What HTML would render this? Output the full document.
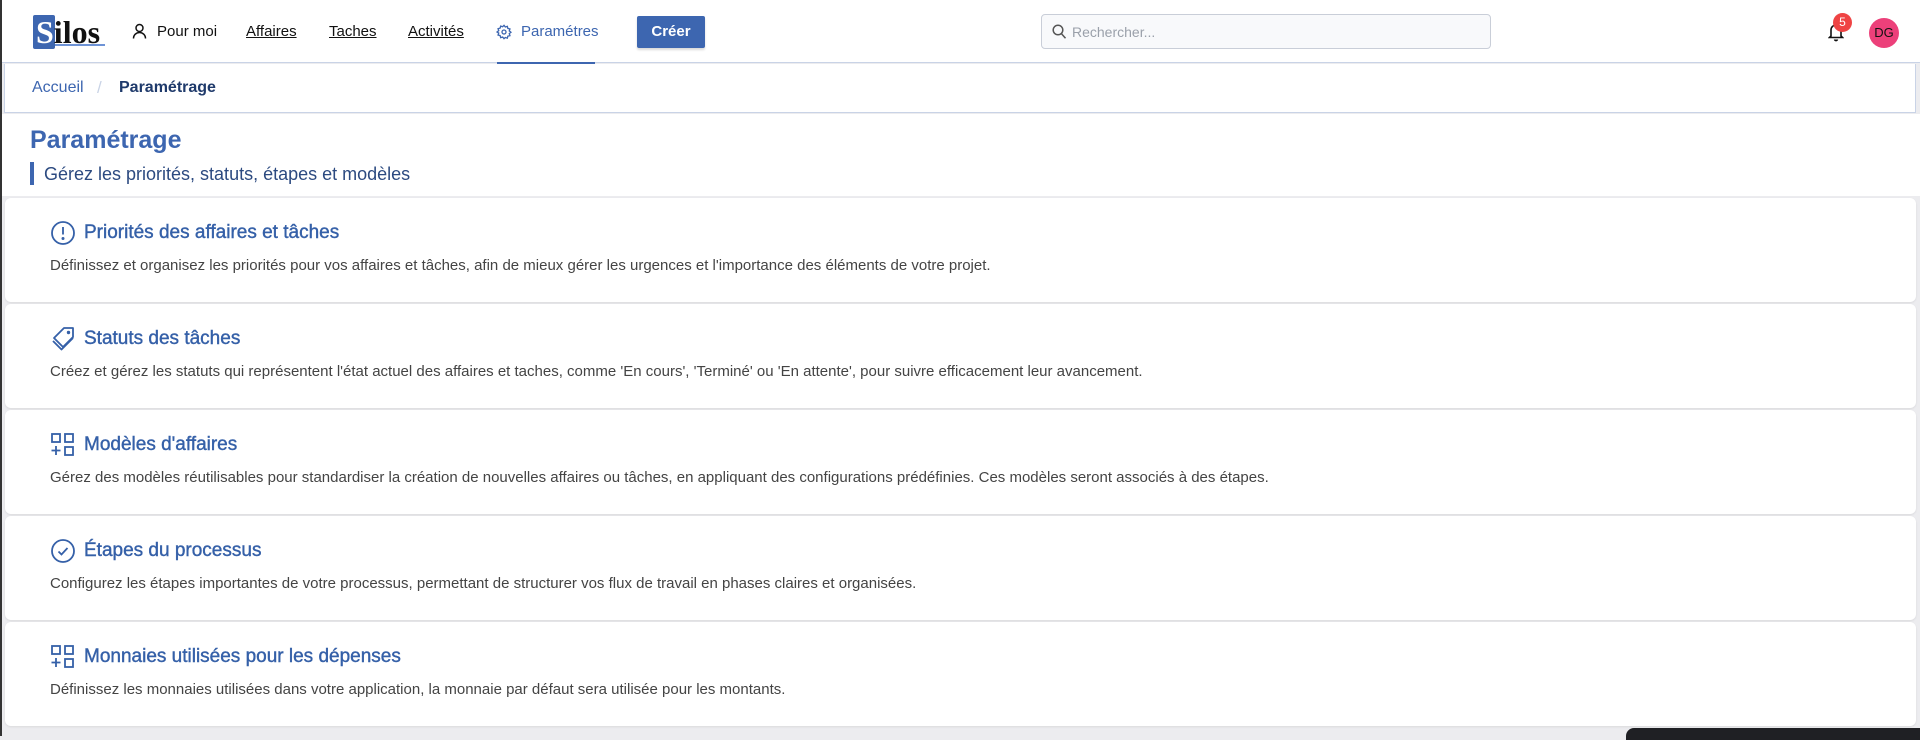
<!DOCTYPE html>
<html><head><meta charset="utf-8"><style>
*{box-sizing:border-box;margin:0;padding:0}
body{width:1920px;height:736px;overflow:hidden;background:#ececef;font-family:"Liberation Sans",sans-serif;position:relative}
.hdr{position:absolute;left:0;top:0;width:1920px;height:63px;background:#fff;border-bottom:1px solid #c9d3e6}
.leftbar{position:absolute;left:0;top:0;width:2px;height:736px;background:#333;z-index:5}
.logo{position:absolute;left:33px;top:15px;height:34px}
.logo .s{position:absolute;left:0;top:0;width:22px;height:34px;background:#3d66b0;border-radius:2px}
.logo .t{position:absolute;left:3px;top:-1px;font-family:"Liberation Serif",serif;font-weight:bold;font-size:32px;color:#111;white-space:nowrap}
.logo .t b{color:#fff}
.logo .u{position:absolute;left:22px;top:29px;width:50px;height:2px;background:#6e93d6}
.nav{position:absolute;top:23px;font-size:15px;color:#111}
.nav.u{text-decoration:underline}
.act{position:absolute;left:497px;top:62px;width:98px;height:3px;background:#3d66b0}
.btn{position:absolute;left:637px;top:16px;width:68px;height:32px;background:#3d66b0;color:#fff;font-weight:bold;font-size:15px;text-align:center;line-height:32px;border-radius:2px;box-shadow:0 2px 2px rgba(0,0,0,.15)}
.search{position:absolute;left:1041px;top:14px;width:450px;height:35px;border:1px solid #c9ced8;border-radius:4px;background:#f8f9fb}
.search span{position:absolute;left:30px;top:9px;font-size:14px;color:#9aa0aa}
.badge{position:absolute;left:1833px;top:13px;width:19px;height:19px;border-radius:50%;background:#ef4444;color:#fff;font-size:12px;text-align:center;line-height:19px}
.av{position:absolute;left:1869px;top:18px;width:30px;height:30px;border-radius:50%;background:#ec407a;color:#111;font-size:13px;text-align:center;line-height:30px}
.bc{position:absolute;left:4px;top:64px;width:1912px;height:49px;background:#fff;border:1px solid #c9d3e6;border-top:none}
.bc .a{position:absolute;left:27px;top:15px;font-size:16px;color:#3d66b0}
.bc .sl{position:absolute;left:92px;top:14px;font-size:17px;color:#c9d3e6}
.bc .p{position:absolute;left:114px;top:15px;font-size:16px;font-weight:bold;color:#1f3a6b}
.ttl{position:absolute;left:0;top:114px;width:1920px;height:82px;background:#fff}
.ttl h1{position:absolute;left:30px;top:12px;font-size:25px;color:#3d66b0;font-weight:bold}
.ttl .bar{position:absolute;left:30px;top:48px;width:4px;height:23px;background:#3d66b0}
.ttl .sub{position:absolute;left:44px;top:50px;font-size:18px;color:#2c4a80}
.card{position:absolute;left:5px;width:1911px;height:104px;background:#fff;border-radius:6px;box-shadow:0 1px 2px rgba(0,0,0,.08)}
.card svg{position:absolute;left:45px;top:22px}
.card h2{position:absolute;left:79px;top:24px;font-size:19px;font-weight:normal;color:#3560a8;-webkit-text-stroke:.4px #3560a8}
.card p{position:absolute;left:45px;top:59px;font-size:15px;color:#444}
.dark{position:absolute;left:1626px;top:728px;width:294px;height:12px;background:#1f2024;border-radius:8px 0 0 0}
</style></head><body>
<div class="leftbar"></div>
<div class="hdr">
 <div class="logo"><div class="s"></div><div class="u"></div><div class="t"><b>S</b>ilos</div></div>
 <svg style="position:absolute;left:132px;top:23px" width="15" height="16" viewBox="0 0 15 16" fill="none" stroke="#111" stroke-width="1.5"><circle cx="7.5" cy="5" r="3.5"/><path d="M1.5 15.5c0-3.5 2.7-6 6-6s6 2.5 6 6"/></svg>
 <div class="nav" style="left:157px">Pour moi</div>
 <div class="nav u" style="left:246px">Affaires</div>
 <div class="nav u" style="left:329px">Taches</div>
 <div class="nav u" style="left:408px">Activités</div>
 <svg style="position:absolute;left:496px;top:24px" width="16" height="16" viewBox="0 0 24 24" fill="none" stroke="#3d66b0" stroke-width="2"><circle cx="12" cy="12" r="3"/><path d="M12 2l2 2.5 3-1 .8 3.1 3.1.8-1 3 2.5 2-2.5 2 1 3-3.1.8-.8 3.1-3-1L12 22l-2-2.5-3 1-.8-3.1-3.1-.8 1-3L1.6 12l2.5-2-1-3 3.1-.8.8-3.1 3 1z"/></svg>
 <div class="nav" style="left:521px;color:#3d66b0">Paramétres</div>
 <div class="act"></div>
 <div class="btn">Créer</div>
 <div class="search"><svg style="position:absolute;left:10px;top:9px" width="15" height="16" viewBox="0 0 15 16" fill="none" stroke="#555" stroke-width="1.5"><circle cx="6" cy="6" r="4.8"/><path d="M9.5 9.8l4 4.5"/></svg><span>Rechercher...</span></div>
 <svg style="position:absolute;left:1828px;top:22px" width="16" height="20" viewBox="0 0 16 20" fill="none" stroke="#111" stroke-width="1.6"><path d="M3 14V8a5 5 0 0110 0v6l1.5 1.5h-13z"/><path d="M6.5 17.5a1.6 1.6 0 003 0"/></svg>
 <div class="badge">5</div>
 <div class="av">DG</div>
</div>
<div class="bc"><span class="a">Accueil</span><span class="sl">/</span><span class="p">Paramétrage</span></div>
<div class="ttl"><h1>Paramétrage</h1><div class="bar"></div><div class="sub">Gérez les priorités, statuts, étapes et modèles</div></div>

<div class="card" style="top:198px">
 <svg width="26" height="26" viewBox="0 0 26 26" fill="none" stroke="#3560a8" stroke-width="1.8"><circle cx="13" cy="13" r="11"/><path d="M13 7v7.5"/><circle cx="13" cy="18.5" r=".6" fill="#3560a8"/></svg>
 <h2>Priorités des affaires et tâches</h2>
 <p>Définissez et organisez les priorités pour vos affaires et tâches, afin de mieux gérer les urgences et l'importance des éléments de votre projet.</p>
</div>
<div class="card" style="top:304px">
 <svg width="26" height="26" viewBox="0 0 26 26" fill="none" stroke="#3560a8" stroke-width="1.8" stroke-linejoin="round"><path d="M14 2h9v9l-10 10-9-9z"/><path d="M3 15l8.5 8.5L23 12"/><circle cx="18.5" cy="6.5" r=".8" fill="#3560a8"/></svg>
 <h2>Statuts des tâches</h2>
 <p>Créez et gérez les statuts qui représentent l'état actuel des affaires et taches, comme 'En cours', 'Terminé' ou 'En attente', pour suivre efficacement leur avancement.</p>
</div>
<div class="card" style="top:410px">
 <svg width="26" height="26" viewBox="0 0 26 26" fill="none" stroke="#3560a8" stroke-width="1.8"><rect x="2" y="2" width="8" height="8"/><rect x="15" y="2" width="8" height="8"/><rect x="15" y="15" width="8" height="8"/><path d="M6 14v9M1.5 18.5h9"/></svg>
 <h2>Modèles d'affaires</h2>
 <p>Gérez des modèles réutilisables pour standardiser la création de nouvelles affaires ou tâches, en appliquant des configurations prédéfinies. Ces modèles seront associés à des étapes.</p>
</div>
<div class="card" style="top:516px">
 <svg width="26" height="26" viewBox="0 0 26 26" fill="none" stroke="#3560a8" stroke-width="1.8"><circle cx="13" cy="13" r="11"/><path d="M8.5 13.5l3 3 6-6.5"/></svg>
 <h2>Étapes du processus</h2>
 <p>Configurez les étapes importantes de votre processus, permettant de structurer vos flux de travail en phases claires et organisées.</p>
</div>
<div class="card" style="top:622px">
 <svg width="26" height="26" viewBox="0 0 26 26" fill="none" stroke="#3560a8" stroke-width="1.8"><rect x="2" y="2" width="8" height="8"/><rect x="15" y="2" width="8" height="8"/><rect x="15" y="15" width="8" height="8"/><path d="M6 14v9M1.5 18.5h9"/></svg>
 <h2>Monnaies utilisées pour les dépenses</h2>
 <p>Définissez les monnaies utilisées dans votre application, la monnaie par défaut sera utilisée pour les montants.</p>
</div>
<div class="dark"></div>
</body></html>
